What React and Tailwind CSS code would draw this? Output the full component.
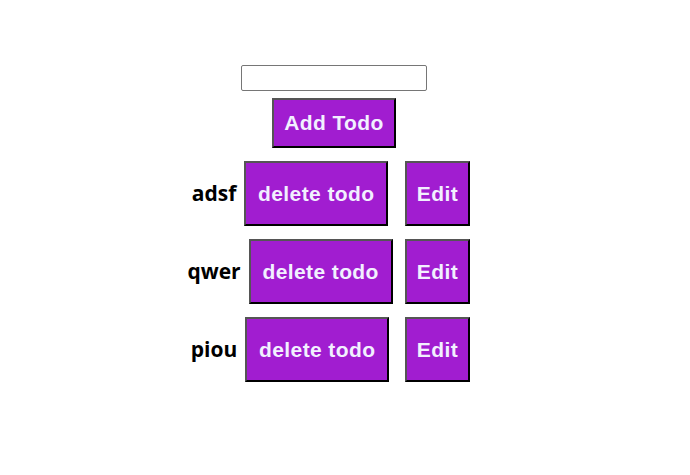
import React from "react";

const btn =
  "flex items-center justify-center bg-[#a11dd0] text-[#f2f0ff] font-bold text-[21px] tracking-[0.4px] border-2 border-t-[#555555] border-l-[#555555] border-r-[#000000] border-b-[#000000] [font-family:'Liberation_Sans',Arial,sans-serif]";

const todos = ["adsf", "qwer", "piou"];

export default function App() {
  return (
    <div className="w-[690px] h-[475px] bg-white flex flex-col">
      <div className="w-[668px] flex flex-col items-center pt-[65px]">
        <input
          type="text"
          className="w-[186px] h-[26px] border border-[#767676] rounded-[2px] bg-white"
        />
        <button className={`${btn} w-[124px] h-[50px] mt-[7px]`}>Add Todo</button>
      </div>
      <div className="flex flex-col gap-[13px] pl-[186px] mt-[13px]">
        {todos.map((t) => (
          <div key={t} className="flex items-center h-[65px]">
            <div className="w-[208px] flex items-center justify-center gap-[8px]">
              <span className="text-[21px] font-bold text-black [font-family:'Open_Sans',sans-serif]">
                {t}
              </span>
              <button className={`${btn} w-[144px] h-[65px]`}>delete todo</button>
            </div>
            <button className={`${btn} w-[65px] h-[65px] ml-[11px]`}>Edit</button>
          </div>
        ))}
      </div>
    </div>
  );
}
